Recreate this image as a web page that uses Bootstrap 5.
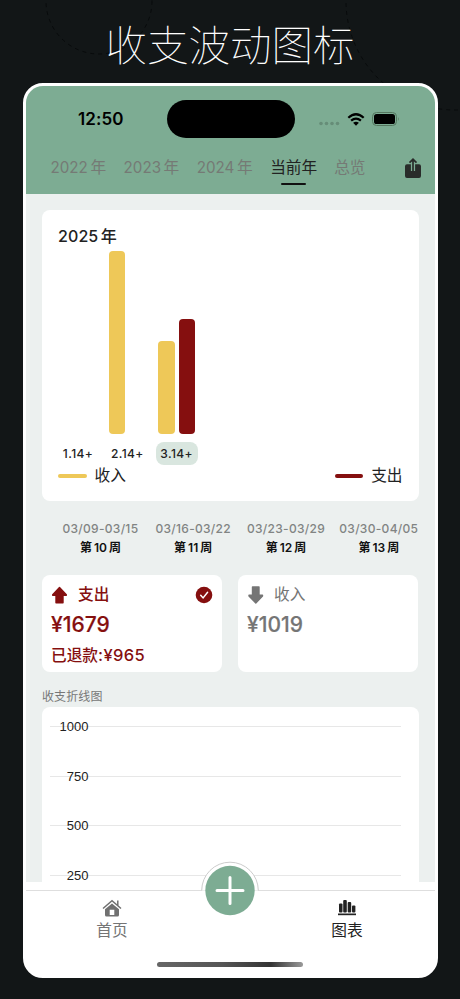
<!DOCTYPE html>
<html lang="zh-CN">
<head>
<meta charset="utf-8">
<meta name="viewport" content="width=device-width, initial-scale=1">
<title>收支波动图标</title>
<link href="https://cdn.jsdelivr.net/npm/bootstrap@5.3.0/dist/css/bootstrap.min.css" rel="stylesheet">
<style>
:root{--green:#7dac93;--mist:#ecf0ef;--gold:#eec858;--wine:#850f0f;--ink:#222}
html,body{height:999px;overflow:hidden}
body{background:#121617;font-family:Inter,"Noto Sans CJK SC",sans-serif;color:var(--ink);line-height:1;width:460px}
.backdrop{left:0;top:0;z-index:-1}
.headline{height:83px;padding-top:1px;font:100 41.5px/85px "Noto Sans CJK SC",sans-serif;color:#fff;margin:0}
.phone{width:414.5px;height:895px;margin-left:23px;border:3px solid #fff;border-radius:20px;background:#fff;overflow:hidden}
.topbar{height:107.5px;background:var(--green);flex:none}
.status{height:66px;padding:0 0 0 52px}
.clock{font-weight:600;font-size:17px;color:#000;width:88.5px;flex:none;letter-spacing:.1px}
.island{width:128px;height:38px;flex:none;border-radius:19px;background:#000}
.signals{margin-left:24.5px;gap:7px}
.years{font-size:15.7px;color:#757a75;padding:7.5px 13px 0 24.5px}
.year{height:36px;margin-right:17.5px;white-space:nowrap;line-height:16px}
.year span{font-size:15.2px;margin-right:2.5px}
.year.picked{color:var(--ink);margin-right:17px}
.year.picked::after{content:"";display:block;width:25px;height:2px;border-radius:2px;background:#111;margin:7.5px auto 0}
.share{margin-left:auto;margin-top:-2px}
.screen{background:var(--mist);padding:16.5px 16px 0;min-height:0;overflow:hidden}
.panel{background:#fff;border-radius:8px}
.trend{height:291px;flex:none;padding:16px 16px 0}
.trend h2{font-size:16px;font-weight:500;line-height:20px;margin:0}
.trend h2 span{margin-right:2.5px;letter-spacing:.1px}
.months{height:219px;margin-left:-4.6px;padding-top:5px}
.month{width:49.3px}
.bars{height:183px;gap:4px}
.bar{width:16.5px;border-radius:4px}
.gold{background:var(--gold)}.wine{background:var(--wine)}
.tag{margin-top:8px;height:23px;width:42px;border-radius:8px;font-size:12px;font-weight:500;line-height:23px;white-space:nowrap;letter-spacing:.4px}
.tag.on{background:#d9e6df}
.dash{width:28.5px;height:4px;border-radius:2px}
.legend{font-size:15.7px;gap:8px;line-height:20px;padding-top:1px}
.legend .dash{margin-top:-1px}
.weeks{height:74px;flex:none;padding-top:22px;margin-left:12px;width:372px}
.week{width:92.8px;flex:none;font-size:12px;font-weight:600;color:#111}
.week span{display:block;color:#818483;font-weight:500;margin-bottom:7px;letter-spacing:.3px;line-height:12px}
.week b{font-weight:600;margin:0 2px}
.totals{gap:16px;flex:none}
.total{width:180px;height:97px;padding:9px 9px 0}
.total .kind{font-size:15.7px;line-height:20px;gap:9px}
.kind em{font-style:normal;padding-top:1px}
.sum{font-size:21px;font-weight:500;line-height:25px;margin-top:6.5px;-webkit-text-stroke:.2px currentColor}
.refund{font-size:15.7px;font-weight:500;line-height:20px;margin-top:8px;white-space:nowrap}
.refund span{font-size:16.5px;letter-spacing:.35px}
.out{color:var(--wine);font-weight:500}.in{color:#757575}
.caption{font-size:12px;line-height:14px;color:#777;margin-top:17.5px;height:17.5px;flex:none;letter-spacing:.1px}
.plot{height:220px;flex:none;padding:10px 18px 0 8px;font:13px/19px "Liberation Sans",sans-serif;color:var(--ink)}
.tick{height:49.5px;flex:none}
.tick b{font-weight:400;width:38.5px;text-align:right;display:block;background:linear-gradient(#e7e7e7,#e7e7e7) 0 9px/100% 1px no-repeat;height:18px;flex:none}
.tick i{height:1px;background:#e7e7e7;margin-top:9px}
.dock{height:93px;padding-top:8px;flex:none;background:#fff}
.dockline{border-top:1px solid #dedede;height:84px}
.tab{top:8px;font-size:15.7px;line-height:20px;width:60px}
.tab svg{display:block;margin:0 auto 4px}
.plus{left:175px;top:-30px}
.home{left:131px;top:70.5px;width:146px;height:5px;border-radius:3px;background:linear-gradient(90deg,#666,#555 45%,#333 78%,#999)}
</style>
<script src="https://cdn.jsdelivr.net/npm/bootstrap@5.3.0/dist/js/bootstrap.bundle.min.js"></script>
</head>
<body>
<svg class="backdrop position-absolute" width="460" height="999" fill="none" stroke="#07090a" stroke-width=".9" stroke-dasharray="4 4"><circle cx="99" cy="1" r="53"/><circle cx="455" cy="1" r="109"/></svg>
<h1 class="headline text-center">收支波动图标</h1>
<main class="phone d-flex flex-column">
  <header class="topbar">
    <div class="status d-flex align-items-center">
      <div class="clock">12:50</div><div class="island"></div>
      <div class="signals d-flex align-items-center">
        <svg width="21" height="14"><g fill="#668d78"><circle cx="2" cy="11.5" r="1.8"/><circle cx="7.5" cy="11.5" r="1.8"/><circle cx="13" cy="11.5" r="1.8"/><circle cx="18.5" cy="11.5" r="1.8"/></g></svg>
        <svg width="18" height="13" viewBox="0 0 18 13" fill="none" stroke="#000" stroke-width="2.2"><path d="M1.3 4.8Q9-2.3 16.7 4.8M4.1 7.7Q9 3.4 13.9 7.7"/><path d="M9 12.7 6.1 9.8Q9 7.6 11.9 9.8Z" fill="#000" stroke="none"/></svg>
        <svg width="28" height="14" viewBox="0 0 28 14"><rect x=".5" y=".5" width="24" height="13" rx="4" fill="none" stroke="#55765f"/><rect x="2" y="2" width="21" height="10" rx="2.6"/><path d="M26 5q1.5 2 0 4z" fill="#55765f"/></svg>
      </div>
    </div>
    <nav class="years d-flex">
      <div class="year"><span>2022</span>年</div><div class="year"><span>2023</span>年</div><div class="year"><span>2024</span>年</div><div class="year picked">当前年</div><div class="year">总览</div>
      <svg class="share" width="18" height="22" viewBox="0 0 18 22"><path d="M3 6.3h3.9v6.7h4.200V6.300H15a2 2 0 0 1 2 2V18a2 2 0 0 1-2 2H3a2 2 0 0 1-2-2V8.300a2 2 0 0 1 2-2z" fill="#292c2a"/><path d="M9 13V1.500M5.500 4.700 9 1.300 12.500 4.700" fill="none" stroke="#292c2a" stroke-width="1.700"/></svg>
    </nav>
  </header>
  <section class="screen flex-grow-1 d-flex flex-column">
    <article class="panel trend">
      <h2><span>2025</span>年</h2>
      <div class="months d-flex">
        <div class="month d-flex flex-column align-items-center"><div class="bars"></div><div class="tag text-center">1.14+</div></div>
        <div class="month d-flex flex-column align-items-center"><div class="bars d-flex align-items-end"><div class="bar gold" style="height:100%"></div><div class="bar"></div></div><div class="tag text-center">2.14+</div></div>
        <div class="month d-flex flex-column align-items-center"><div class="bars d-flex align-items-end"><div class="bar gold" style="height:50.8%"></div><div class="bar wine" style="height:62.8%"></div></div><div class="tag on text-center">3.14+</div></div>
      </div>
      <div class="d-flex justify-content-between"><div class="legend d-flex align-items-center"><span class="dash gold"></span>收入</div><div class="legend d-flex align-items-center"><span class="dash wine"></span>支出</div></div>
    </article>
    <div class="weeks d-flex text-center">
      <div class="week"><span>03/09-03/15</span>第<b>10</b>周</div><div class="week"><span>03/16-03/22</span>第<b>11</b>周</div><div class="week"><span>03/23-03/29</span>第<b>12</b>周</div><div class="week"><span>03/30-04/05</span>第<b>13</b>周</div>
    </div>
    <div class="totals d-flex">
      <article class="panel total out">
        <div class="kind d-flex align-items-center"><svg width="18" height="18" viewBox="0 0 18 18" fill="currentColor" stroke="currentColor" stroke-width="1.4" stroke-linejoin="round"><path d="M8.5 1.5 15.3 8.7v.6H12v7.500H5V9.300H1.700v-.6z"/></svg><em>支出</em>
          <svg class="ms-auto" width="18" height="18" viewBox="0 0 18 18"><circle cx="9" cy="9" r="8.3" fill="currentColor"/><path d="m5.700 9.200 2.400 2.700 4.500-5.600" fill="none" stroke="#fff" stroke-width="1.500" stroke-linecap="round"/></svg></div>
        <div class="sum">¥1679</div><div class="refund">已退款<span>:¥965</span></div>
      </article>
      <article class="panel total in">
        <div class="kind d-flex align-items-center"><svg width="18" height="18" viewBox="0 0 18 18" fill="currentColor" stroke="currentColor" stroke-width="1.4" stroke-linejoin="round"><path d="M5.500 1H12v8.300h3.500v.6L8.800 17 2 9.900v-.6h3.500z"/></svg><em>收入</em></div>
        <div class="sum">¥1019</div>
      </article>
    </div>
    <div class="caption">收支折线图</div>
    <article class="panel plot">
      <div class="tick d-flex"><b>1000</b><i class="flex-grow-1"></i></div><div class="tick d-flex"><b>750</b><i class="flex-grow-1"></i></div><div class="tick d-flex"><b>500</b><i class="flex-grow-1"></i></div><div class="tick d-flex"><b>250</b><i class="flex-grow-1"></i></div>
    </article>
  </section>
  <footer class="dock">
    <div class="dockline position-relative d-flex">
      <div class="tab position-relative text-center in" style="margin-left:56px"><svg width="20" height="18" viewBox="0 0 20 18"><path d="M1 9.500 10 1.700l9 7.800M15.800 1.500v5" fill="none" stroke="#707070" stroke-width="1.500"/><path d="m3 10.300 7-5.800 7 5.800V16a1.500 1.500 0 0 1-1.500 1.500h-11A1.500 1.500 0 0 1 3 16z" fill="#707070"/><path d="M7.700 10.800h4.600V16H7.700z" fill="#fff"/></svg>首页</div>
      <div class="tab position-relative text-center" style="margin-left:175px"><svg width="20" height="18" viewBox="0 0 20 18" fill="#222"><rect x="2" y="4.500" width="3.500" height="9" rx="1"/><rect x="6.200" y="1" width="3.600" height="12.500" rx="1"/><rect x="10.700" y="3" width="3.500" height="10.500" rx="1"/><rect x="15" y="6.500" width="3.400" height="7" rx="1"/><rect x="1" y="14.500" width="18" height="1.700"/></svg>图表</div>
      <svg class="plus position-absolute" width="58" height="58" viewBox="0 0 58 58"><path d="M.7 29.500a28.300 28.300 0 0 1 56.600 0" fill="#fff" stroke="#ccc"/><circle cx="29" cy="29.500" r="24.700" fill="#7dac93"/><path d="M29 16.500v26M16 29.500h26" stroke="#fff" stroke-width="3" stroke-linecap="round"/></svg>
      <div class="home position-absolute"></div>
    </div>
  </footer>
</main>
</body>
</html>
